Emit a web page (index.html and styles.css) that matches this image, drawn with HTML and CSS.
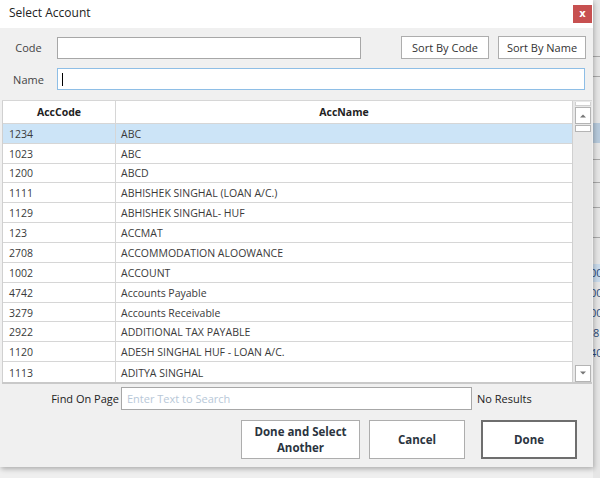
FILE: index.html
```html
<!DOCTYPE html>
<html>
<head>
<meta charset="utf-8">
<link rel="stylesheet" href="styles.css">
</head>
<body>
<div class="screen">
  <div class="dialog">
    <div class="titlebar">
      <span class="title">Select Account</span>
      <span class="close">x</span>
    </div>
    <div class="body">
      <div class="row row-code">
        <label class="lbl">Code</label>
        <div class="input code-input"></div>
        <div class="sort-btns">
          <button class="btn sort">Sort By Code</button>
          <button class="btn sort">Sort By Name</button>
        </div>
      </div>
      <div class="row row-name">
        <label class="lbl">Name</label>
        <div class="input name-input"><span class="caret"></span></div>
      </div>
      <div class="gridwrap">
        <div class="grid">
          <div class="grow ghead"><div class="c1">AccCode</div><div class="c2">AccName</div></div>
          <div class="grow sel"><div class="c1">1234</div><div class="c2">ABC</div></div>
          <div class="grow"><div class="c1">1023</div><div class="c2">ABC</div></div>
          <div class="grow"><div class="c1">1200</div><div class="c2">ABCD</div></div>
          <div class="grow"><div class="c1">1111</div><div class="c2">ABHISHEK SINGHAL (LOAN A/C.)</div></div>
          <div class="grow"><div class="c1">1129</div><div class="c2">ABHISHEK SINGHAL- HUF</div></div>
          <div class="grow"><div class="c1">123</div><div class="c2">ACCMAT</div></div>
          <div class="grow"><div class="c1">2708</div><div class="c2">ACCOMMODATION ALOOWANCE</div></div>
          <div class="grow"><div class="c1">1002</div><div class="c2">ACCOUNT</div></div>
          <div class="grow"><div class="c1">4742</div><div class="c2">Accounts Payable</div></div>
          <div class="grow"><div class="c1">3279</div><div class="c2">Accounts Receivable</div></div>
          <div class="grow"><div class="c1">2922</div><div class="c2">ADDITIONAL TAX PAYABLE</div></div>
          <div class="grow"><div class="c1">1120</div><div class="c2">ADESH SINGHAL HUF - LOAN A/C.</div></div>
          <div class="grow last"><div class="c1">1113</div><div class="c2">ADITYA SINGHAL</div></div>
        </div>
        <div class="vscroll">
          <div class="sb-top"></div>
          <div class="sb-btn"><svg width="8" height="5" viewBox="0 0 8 5"><path d="M1 4.5 L4 1.5 L7 4.5 Z" fill="#777"/></svg></div>
          <div class="sb-thumb"></div>
          <div class="sb-fill"></div>
          <div class="sb-btn down"><svg width="8" height="5" viewBox="0 0 8 5"><path d="M1 0.5 L4 3.5 L7 0.5 Z" fill="#777"/></svg></div>
        </div>
      </div>
      <div class="row row-find">
        <label class="find-lbl">Find On Page</label>
        <div class="input find-input"><span class="ph">Enter Text to Search</span></div>
        <span class="noresults">No Results</span>
      </div>
      <div class="actions">
        <button class="btn act another">Done and Select<br>Another</button>
        <button class="btn act cancel">Cancel</button>
        <button class="btn act done">Done</button>
      </div>
    </div>
  </div>
  <div class="behind">
    <div class="bh-line l1"></div>
    <div class="bh-line l2"></div>
    <div class="bh-sel"></div>
    <div class="bh-line l0"></div>
    <div class="bh-line l3"></div>
    <div class="bh-line l4"></div>
    <div class="bh-line l5"></div>
    <div class="bh-sel2"></div>
    <div class="bh-num n1">00</div>
    <div class="bh-num n2">00</div>
    <div class="bh-num n3">00</div>
    <div class="bh-num n4">8</div>
    <div class="bh-num n5">40</div>
  </div>
</div>
</body>
</html>
```

FILE: styles.css
```css
* { box-sizing: border-box; }
html, body { margin: 0; padding: 0; }
body {
  width: 600px;
  height: 478px;
  overflow: hidden;
  background: #efefef;
  font-family: "Open Sans", "Noto Sans", sans-serif;
  color: #333;
}
.screen {
  display: flex;
  width: 600px;
  height: 478px;
}
.dialog {
  width: 593px;
  height: 467px;
  flex: none;
  background: #f0f0f0;
  display: flex;
  flex-direction: column;
  box-shadow: 1px 2px 5px rgba(0,0,0,0.28);
  position: relative;
  z-index: 2;
}
.titlebar {
  height: 28px;
  background: #fff;
  display: flex;
  align-items: flex-start;
  justify-content: space-between;
  padding-left: 9px;
  padding-right: 1px;
}
.title {
  font-size: 12px;
  color: #222;
  margin-top: 4px;
}
.close {
  margin-top: 5px;
  width: 19px;
  height: 18px;
  background: #c75050;
  color: #fff;
  font-size: 10px;
  font-weight: bold;
  font-family: "DejaVu Sans", sans-serif;
  display: flex;
  align-items: center;
  justify-content: center;
  line-height: 1;
}
.body {
  display: flex;
  flex-direction: column;
  flex: 1;
}
.row {
  display: flex;
  align-items: center;
}
.row-code { margin-top: 8px; height: 23px; }
.row-name { margin-top: 9px; height: 22px; }
.lbl {
  width: 57px;
  text-align: center;
  font-size: 11px;
  color: #444;
}
.input {
  background: #fff;
  border: 1px solid #a7a7a7;
  height: 22px;
}
.code-input { width: 304px; }
.name-input {
  width: 528px;
  border-color: #8ebee6;
  display: flex;
  align-items: center;
  padding-left: 4px;
}
.caret {
  width: 1px;
  height: 13px;
  background: #000;
}
.sort-btns {
  display: flex;
  gap: 9px;
  margin-left: 40px;
}
.btn {
  background: #fff;
  border: 1px solid #adadad;
  font-family: "Open Sans", "Noto Sans", sans-serif;
  color: #333;
  padding: 0;
  cursor: default;
}
.sort {
  height: 23px;
  font-size: 11px;
  width: 88px;
}
.gridwrap {
  margin-top: 10px;
  margin-left: 2px;
  width: 590px;
  height: 284px;
  display: flex;
  border-top: 1px solid #d6d6d6;
  border-bottom: 2px solid #c9c9c9;
}
.grid {
  width: 571px;
  border-left: 1px solid #d0d0d0;
  border-right: 1px solid #d0d0d0;
  background: #fff;
  display: flex;
  flex-direction: column;
}
.grow {
  display: grid;
  grid-template-columns: 113px 1fr;
  height: 20px;
  border-bottom: 1px solid #d6d6d6;
  font-size: 10.5px;
  color: #3a3a3a;
}
.grow.last { border-bottom: none; }
.grow .c1 {
  border-right: 1px solid #d6d6d6;
  padding-left: 6px;
  padding-top: 1px;
  display: flex;
  align-items: center;
}
.grow .c2 {
  padding-left: 5px;
  padding-top: 1px;
  display: flex;
  align-items: center;
}
.ghead {
  height: 23px;
  font-weight: bold;
  color: #222;
}
.ghead .c1, .ghead .c2 {
  justify-content: center;
  padding-left: 0;
  padding-top: 0;
}
.grow.sel { background: #cce4f7; }
.vscroll {
  flex: 1;
  background: #e8e8e8;
  display: flex;
  flex-direction: column;
  align-items: center;
  padding-top: 1px;
}
.sb-top {
  width: 16px;
  height: 4px;
  background: #fff;
  border: 1px solid #d0d0d0;
  border-top: none;
}
.sb-btn {
  width: 16px;
  height: 17px;
  background: #fff;
  border: 1px solid #b4b4b4;
  margin-top: 1px;
  display: flex;
  align-items: center;
  justify-content: center;
}
.sb-thumb {
  width: 16px;
  height: 7px;
  background: #fff;
  border: 1px solid #b4b4b4;
  margin-top: 1px;
}
.sb-fill { flex: 1; }
.sb-btn.down {
  margin-top: 0;
  height: 17px;
}
.row-find {
  margin-top: 3px;
  height: 23px;
}
.find-lbl {
  width: 121px;
  text-align: right;
  padding-right: 2px;
  font-size: 11px;
  color: #222;
}
.find-input {
  width: 351px;
  height: 23px;
  display: flex;
  align-items: center;
  padding-left: 5px;
}
.ph {
  font-size: 11px;
  color: #b8c8d8;
}
.noresults {
  margin-left: 5px;
  font-size: 11px;
  color: #222;
}
.actions {
  display: flex;
  margin-top: 10px;
  padding-left: 241px;
}
.act {
  height: 39px;
  font-size: 11.5px;
  font-weight: bold;
  color: #2b3440;
  line-height: 16px;
}
.another { width: 119px; }
.cancel { width: 96px; margin-left: 9px; }
.done {
  width: 96px;
  margin-left: 16px;
  border: 2px solid #6e6e6e;
}
.behind {
  flex: 1;
  position: relative;
  background: #e6e6e6;
  overflow: hidden;
}
.bh-line {
  position: absolute;
  left: 0;
  right: 0;
  height: 1px;
  background: #a8a8a8;
}
.l1 { top: 56px; }
.l2 { top: 76px; }
.l0 { top: 159px; }
.l3 { top: 182px; }
.l4 { top: 207px; }
.l5 { top: 237px; }
.bh-sel {
  position: absolute;
  left: 0;
  right: 0;
  top: 123px;
  height: 20px;
  background: #b7cadc;
}
.bh-sel2 {
  position: absolute;
  left: 0;
  right: 0;
  top: 264px;
  height: 18px;
  background: #c9dbec;
}
.bh-num {
  position: absolute;
  left: -3px;
  font-size: 11px;
  line-height: 15px;
  color: #2a4a78;
}
.n1 { top: 265px; }
.n2 { top: 285px; }
.n3 { top: 305px; }
.n4 { top: 325px; left: 0; }
.n5 { top: 345px; }
```
